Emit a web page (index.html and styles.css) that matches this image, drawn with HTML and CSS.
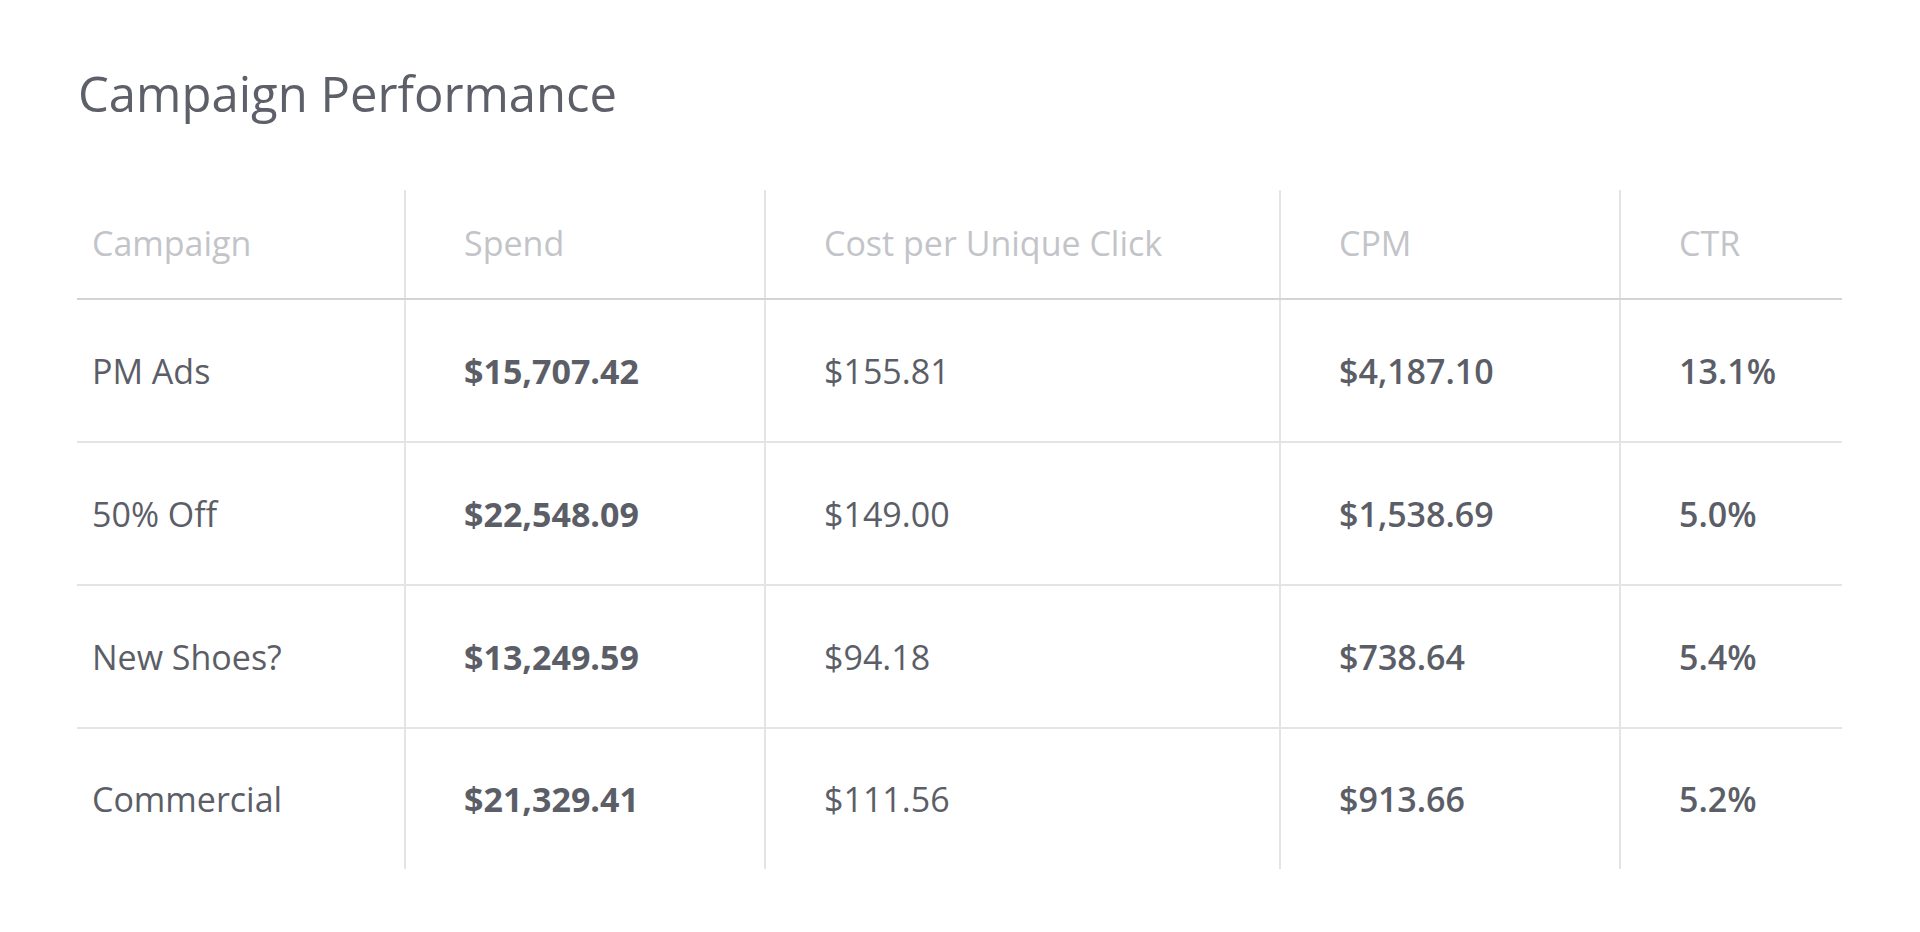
FILE: index.html
```html
<!DOCTYPE html>
<html lang="en">
<head>
<meta charset="utf-8">
<title>Campaign Performance</title>
<link rel="stylesheet" href="styles.css">
</head>
<body>
<main class="page">
  <h1 class="title">Campaign Performance</h1>
  <div class="table" role="table">
    <div class="row head" role="row">
      <div class="cell first" role="columnheader">Campaign</div>
      <div class="cell" role="columnheader">Spend</div>
      <div class="cell" role="columnheader">Cost per Unique Click</div>
      <div class="cell" role="columnheader">CPM</div>
      <div class="cell" role="columnheader">CTR</div>
    </div>
    <div class="row" role="row">
      <div class="cell first" role="cell">PM Ads</div>
      <div class="cell bold" role="cell">$15,707.42</div>
      <div class="cell" role="cell">$155.81</div>
      <div class="cell semi" role="cell">$4,187.10</div>
      <div class="cell semi" role="cell">13.1%</div>
    </div>
    <div class="row" role="row">
      <div class="cell first" role="cell">50% Off</div>
      <div class="cell bold" role="cell">$22,548.09</div>
      <div class="cell" role="cell">$149.00</div>
      <div class="cell semi" role="cell">$1,538.69</div>
      <div class="cell semi" role="cell">5.0%</div>
    </div>
    <div class="row" role="row">
      <div class="cell first" role="cell">New Shoes?</div>
      <div class="cell bold" role="cell">$13,249.59</div>
      <div class="cell" role="cell">$94.18</div>
      <div class="cell semi" role="cell">$738.64</div>
      <div class="cell semi" role="cell">5.4%</div>
    </div>
    <div class="row last" role="row">
      <div class="cell first" role="cell">Commercial</div>
      <div class="cell bold" role="cell">$21,329.41</div>
      <div class="cell" role="cell">$111.56</div>
      <div class="cell semi" role="cell">$913.66</div>
      <div class="cell semi" role="cell">5.2%</div>
    </div>
  </div>
</main>
</body>
</html>
```

FILE: styles.css
```css
* { box-sizing: border-box; }

html, body {
  margin: 0;
  padding: 0;
  background: #ffffff;
}

body {
  font-family: "Open Sans", "Noto Sans", sans-serif;
  color: #5b5e66;
}

.page {
  padding: 69px 78px 0 77px;
}

.title {
  margin: 0;
  padding-left: 1px;
  font-size: 49px;
  line-height: 48px;
  font-weight: 400;
  color: #5d6068;
}

.table {
  margin-top: 73px;
  width: 1765px;
}

.row {
  display: grid;
  grid-template-columns: 327px 360px 515px 340px 223px;
  height: 143px;
  border-bottom: 2px solid #e4e4e6;
}

.row.head {
  height: 110px;
  border-bottom-color: #d3d4d7;
}

.row.last {
  height: 140px;
  border-bottom: none;
}

.cell {
  display: flex;
  align-items: center;
  padding-left: 58px;
  border-left: 2px solid #e4e4e6;
  font-size: 34px;
  font-weight: 400;
  color: #5b5e67;
  white-space: nowrap;
}

.cell.first {
  padding-left: 15px;
  border-left: none;
}

.head .cell {
  color: #c2c4c9;
  font-weight: 400;
  padding-bottom: 3px;
}

.cell.bold { font-weight: 700; }
.cell.semi { font-weight: 600; }
```
